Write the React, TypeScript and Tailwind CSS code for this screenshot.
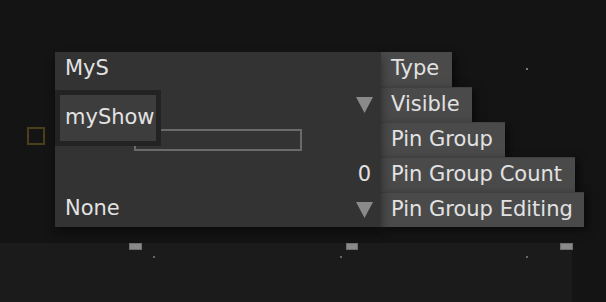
import React from "react";

const font = { fontFamily: '"DejaVu Sans", "Liberation Sans", sans-serif' };

function Tri() {
  return (
    <svg width="17" height="17" viewBox="0 0 17 17">
      <polygon points="0,1 17,1 8.5,17" fill="#8a8a8a" />
    </svg>
  );
}

const labels: { t: string; w: number }[] = [
  { t: "Type", w: 71 },
  { t: "Visible", w: 91 },
  { t: "Pin Group", w: 124 },
  { t: "Pin Group Count", w: 194 },
  { t: "Pin Group Editing", w: 203 },
];

export default function App() {
  return (
    <div className="w-[606px] h-[302px] bg-[#141414] flex flex-col overflow-hidden text-[21px] leading-none text-[#e2e2e2]" style={font}>
      <div className="relative h-[52px] shrink-0">
        <div className="absolute left-[526px] top-[68px] w-[2px] h-[2px] bg-[#777]" />
      </div>
      <div className="flex items-start h-[175px] shrink-0">
        <div className="w-[55px] flex justify-start pl-[27px] pt-[75px]">
          <div className="w-[18px] h-[18px] border-2 border-[#4d3f1c]" />
        </div>
        <div className="relative w-[326px] h-[175px] bg-[#333333] flex flex-col shadow-[0_6px_10px_rgba(0,0,0,0.45)]">
          <div className="h-[35px] flex items-center pl-[10px] pb-[2px]">MyS</div>
          <div className="h-[35px] flex items-center justify-end pr-[8px]">
            <Tri />
          </div>
          <div className="h-[35px] flex items-center pl-[79px]">
            <div className="w-[168px] h-[22px] border-2 border-[#6a6a6a]" />
          </div>
          <div className="h-[35px] flex items-center justify-end pr-[10px]">0</div>
          <div className="h-[35px] flex items-center justify-between pl-[10px] pr-[8px]">
            <span className="pb-[2px]">None</span>
            <Tri />
          </div>
          <div className="absolute left-0 top-[38px] w-[106px] h-[56px] bg-[#232323] p-[5px] pr-[5px]">
            <div className="w-[96px] h-[46px] bg-[#3d3d3d] flex items-center pl-[5px] pb-[1px]">myShow</div>
          </div>
        </div>
        <div className="flex flex-col items-start">
          {labels.map((l, i) => (
            <div
              key={l.t}
              className={`h-[35px] flex items-center pl-[10px] pb-[2px] bg-[#4a4a4a] shadow-[4px_3px_8px_rgba(0,0,0,0.5)] ${i > 0 ? "border-t border-[#414141]" : ""}`}
              style={{ width: l.w }}
            >
              {l.t}
            </div>
          ))}
        </div>
      </div>
      <div className="h-[16px] shrink-0" />
      <div className="relative w-[572px] flex-1 bg-[#1b1b1b]">
        <div className="absolute left-[129px] top-0 w-[13px] h-[7px] bg-[#8a8a8a] border border-[#6e6e6e]" />
        <div className="absolute left-[346px] top-0 w-[12px] h-[7px] bg-[#8a8a8a] border border-[#6e6e6e]" />
        <div className="absolute left-[560px] top-0 w-[13px] h-[7px] bg-[#8a8a8a] border border-[#6e6e6e]" />
        <div className="absolute left-[153px] top-[13px] w-[2px] h-[2px] bg-[#666]" />
        <div className="absolute left-[340px] top-[13px] w-[2px] h-[2px] bg-[#666]" />
        <div className="absolute left-[526px] top-[13px] w-[2px] h-[2px] bg-[#666]" />
      </div>
    </div>
  );
}
